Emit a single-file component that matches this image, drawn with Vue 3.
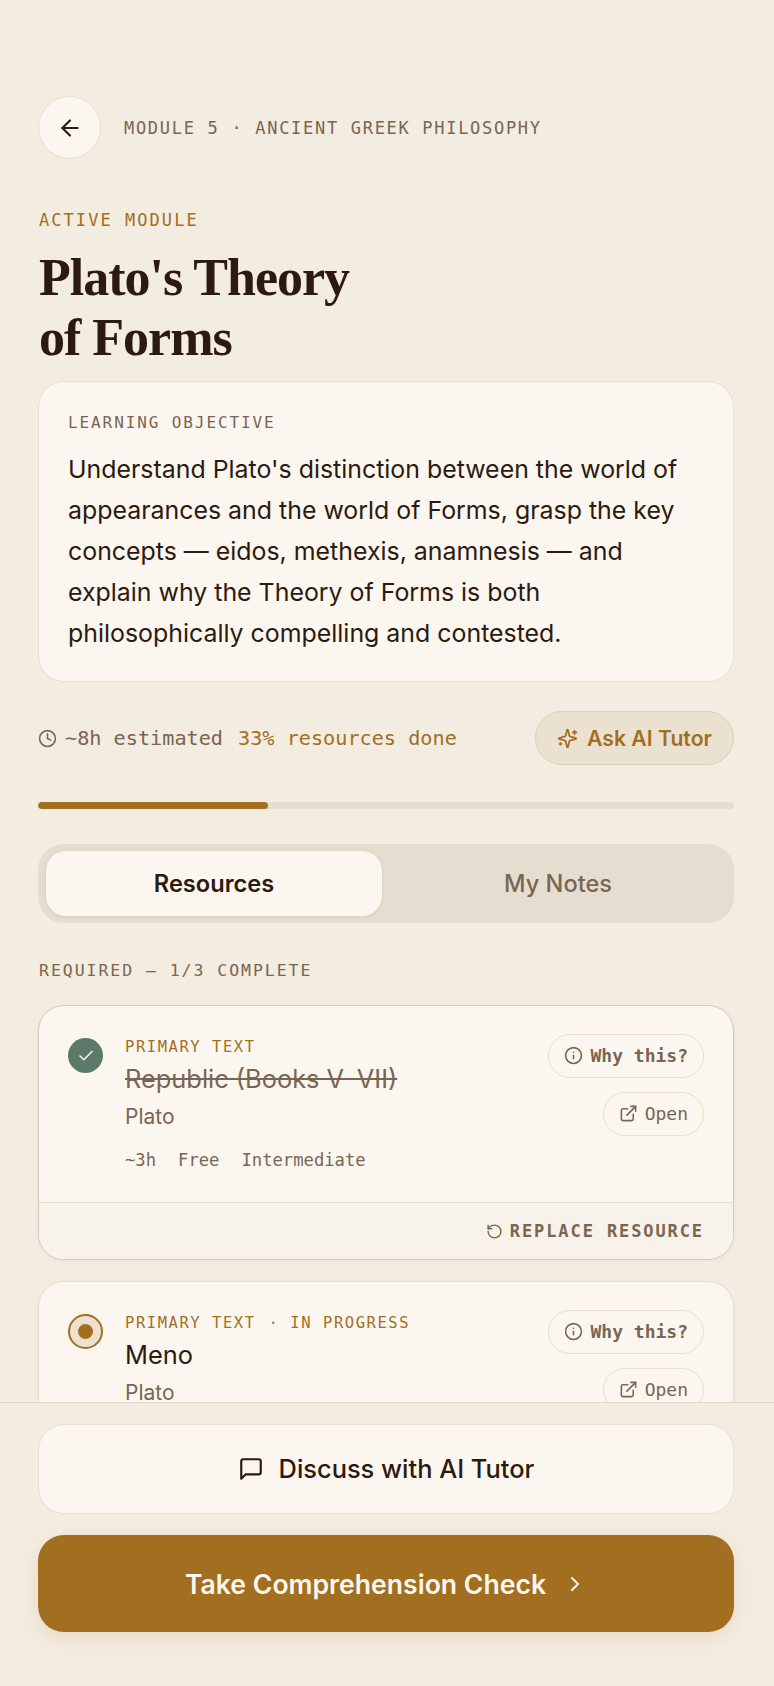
<template>
  <div class="screen">
    <div class="scroll">
      <header class="top">
        <button class="back">
          <svg class="ico" width="26" height="26" viewBox="0 0 24 24"><path d="m12 19-7-7 7-7" /><path d="M19 12H5" /></svg>
        </button>
        <span class="crumb">MODULE 5 · ANCIENT GREEK PHILOSOPHY</span>
      </header>

      <div class="eyebrow">ACTIVE MODULE</div>
      <h1 class="title">Plato's Theory<br />of Forms</h1>

      <section class="objective">
        <div class="objective-label">LEARNING OBJECTIVE</div>
        <p class="objective-text">
          Understand Plato's distinction between the world of appearances and the world of Forms, grasp the key concepts — eidos, methexis, anamnesis — and explain why the Theory of Forms is both philosophically compelling and contested.
        </p>
      </section>

      <div class="meta-row">
        <div class="meta">
          <svg class="ico" width="19" height="19" viewBox="0 0 24 24"><circle cx="12" cy="12" r="10" /><polyline points="12 6 12 12 16 14" /></svg>
          <span class="estimate">~8h estimated</span>
          <span class="done">{{ progress }}% resources done</span>
        </div>
        <button class="ask">
          <svg class="ico" width="21" height="21" viewBox="0 0 24 24"><path d="M9.937 15.5A2 2 0 0 0 8.5 14.063l-6.135-1.582a.5.5 0 0 1 0-.962L8.5 9.936A2 2 0 0 0 9.937 8.5l1.582-6.135a.5.5 0 0 1 .963 0L14.063 8.5A2 2 0 0 0 15.5 9.937l6.135 1.581a.5.5 0 0 1 0 .964L15.5 14.063a2 2 0 0 0-1.437 1.437l-1.582 6.135a.5.5 0 0 1-.963 0z" /><path d="M20 3v4" /><path d="M22 5h-4" /><path d="M4 17v2" /><path d="M5 18H3" /></svg>
          Ask AI Tutor
        </button>
      </div>

      <div class="bar"><div class="bar-fill" :style="{ width: progress + '%' }"></div></div>

      <div class="tabs">
        <div class="tab active">Resources</div>
        <div class="tab">My Notes</div>
      </div>

      <div class="section-label">REQUIRED — 1/3 COMPLETE</div>

      <article class="card done-card">
        <div class="card-body">
          <span class="status status-done">
            <svg class="ico" width="18" height="18" viewBox="0 0 24 24"><path d="M20 6 9 17l-5-5" /></svg>
          </span>
          <div class="card-main">
            <div class="kind">PRIMARY TEXT</div>
            <div class="name struck">Republic (Books V–VII)</div>
            <div class="author">Plato</div>
            <div class="facts"><span>~3h</span><span>Free</span><span>Intermediate</span></div>
          </div>
          <div class="actions">
            <button class="pill strong">
              <svg class="ico" width="19" height="19" viewBox="0 0 24 24"><circle cx="12" cy="12" r="10" /><path d="M12 16v-4" /><path d="M12 8h.01" /></svg>
              Why this?
            </button>
            <button class="pill">
              <svg class="ico" width="19" height="19" viewBox="0 0 24 24"><path d="M15 3h6v6" /><path d="M10 14 21 3" /><path d="M18 13v6a2 2 0 0 1-2 2H5a2 2 0 0 1-2-2V8a2 2 0 0 1 2-2h6" /></svg>
              Open
            </button>
          </div>
        </div>
        <div class="card-foot">
          <svg class="ico" width="17" height="17" viewBox="0 0 24 24"><path d="M3 12a9 9 0 1 0 9-9 9.75 9.75 0 0 0-6.74 2.74L3 8" /><path d="M3 3v5h5" /></svg>
          REPLACE RESOURCE
        </div>
      </article>

      <article class="card">
        <div class="card-body">
          <span class="status status-active"><i></i></span>
          <div class="card-main">
            <div class="kind">PRIMARY TEXT<span class="kind-extra">· IN PROGRESS</span></div>
            <div class="name">Meno</div>
            <div class="author">Plato</div>
          </div>
          <div class="actions">
            <button class="pill strong">
              <svg class="ico" width="19" height="19" viewBox="0 0 24 24"><circle cx="12" cy="12" r="10" /><path d="M12 16v-4" /><path d="M12 8h.01" /></svg>
              Why this?
            </button>
            <button class="pill">
              <svg class="ico" width="19" height="19" viewBox="0 0 24 24"><path d="M15 3h6v6" /><path d="M10 14 21 3" /><path d="M18 13v6a2 2 0 0 1-2 2H5a2 2 0 0 1-2-2V8a2 2 0 0 1 2-2h6" /></svg>
              Open
            </button>
          </div>
        </div>
      </article>
    </div>

    <footer class="footer">
      <button class="discuss">
        <svg class="ico" width="26" height="26" viewBox="0 0 24 24"><path d="M21 15a2 2 0 0 1-2 2H7l-4 4V5a2 2 0 0 1 2-2h14a2 2 0 0 1 2 2z" /></svg>
        Discuss with AI Tutor
      </button>
      <button class="check">
        Take Comprehension Check
        <svg class="ico" width="24" height="24" viewBox="0 0 24 24"><path d="m9 18 6-6-6-6" /></svg>
      </button>
    </footer>
  </div>
</template>

<script setup>
const progress = 33
</script>

<style>
html,
body {
  margin: 0;
  background: #f3ece0;
}
</style>

<style scoped>
.screen {
  height: 1686px;
  display: flex;
  flex-direction: column;
  background: #f3ece0;
  color: #2c1a0e;
  font-family: Inter, "Liberation Sans", sans-serif;
}

.scroll {
  flex: 1;
  min-height: 0;
  overflow: hidden;
  padding: 96px 40px 0 38px;
}

button {
  font-family: inherit;
  cursor: pointer;
}

.ico {
  flex: none;
  fill: none;
  stroke: currentColor;
  stroke-width: 2;
  stroke-linecap: round;
  stroke-linejoin: round;
}

.top {
  display: flex;
  align-items: center;
  gap: 23px;
}

.back {
  width: 63px;
  height: 63px;
  padding: 0;
  display: flex;
  align-items: center;
  justify-content: center;
  border: 1px solid #e8dfcf;
  border-radius: 50%;
  background: #fbf7f0;
  color: #2c1a0e;
}

.crumb,
.eyebrow,
.objective-label,
.section-label,
.kind,
.facts,
.meta,
.pill,
.card-foot {
  font-family: "DejaVu Sans Mono", "Liberation Mono", monospace;
}

.crumb {
  font-size: 17px;
  letter-spacing: 1.7px;
  color: #7a6552;
}

.eyebrow,
.title,
.section-label {
  margin-left: 1px;
}

.eyebrow {
  margin-top: 50px;
  font-size: 17px;
  line-height: 22px;
  letter-spacing: 2.05px;
  color: #a16f1f;
}

.title {
  margin-top: 17px;
  margin-bottom: 0;
  margin-right: 0;
  font-family: "Liberation Serif", "DejaVu Serif", serif;
  font-size: 52px;
  line-height: 60px;
  letter-spacing: -1px;
  font-weight: 700;
  color: #2c1a0e;
}

.objective {
  margin-top: 13px;
  padding: 30px 28px 27px 29px;
  border: 1px solid #e8dfcf;
  border-radius: 26px;
  background: #fbf7f0;
}

.objective-label {
  font-size: 16px;
  line-height: 22px;
  letter-spacing: 1.9px;
  color: #7a6552;
}

.objective-text {
  margin: 15px 0 0;
  font-size: 24.9px;
  line-height: 41px;
  color: #2c1a0e;
}

.meta-row {
  margin-top: 29px;
  display: flex;
  align-items: center;
  justify-content: space-between;
}

.meta {
  display: flex;
  align-items: center;
  font-size: 20.2px;
  color: #7a6552;
}

.estimate {
  margin-left: 8px;
}

.done {
  margin-left: 15px;
  color: #a16f1f;
}

.ask {
  height: 54px;
  width: 199px;
  display: flex;
  align-items: center;
  justify-content: center;
  gap: 9px;
  padding: 0;
  border: 1px solid #d9cfba;
  border-radius: 27px;
  background: #ebe1d0;
  color: #a16f1f;
  font-size: 21.2px;
  font-weight: 600;
}

.bar {
  margin-top: 37px;
  height: 7px;
  border-radius: 4px;
  background: #e5ddd0;
  overflow: hidden;
}

.bar-fill {
  height: 100%;
  border-radius: 4px;
  background: #a16f1f;
}

.tabs {
  margin-top: 35px;
  padding: 7px 8px;
  display: flex;
  gap: 8px;
  border-radius: 26px;
  background: #e5ddd0;
}

.tab {
  flex: 1;
  height: 65px;
  display: flex;
  align-items: center;
  justify-content: center;
  border-radius: 20px;
  font-size: 23.6px;
  font-weight: 500;
  color: #7a6552;
}

.tab.active {
  background: #fbf7f0;
  color: #2c1a0e;
  font-weight: 600;
  box-shadow: 0 1px 4px rgba(44, 26, 14, 0.08);
}

.section-label {
  margin-top: 37px;
  font-size: 16.5px;
  line-height: 22px;
  letter-spacing: 1.95px;
  color: #7a6552;
}

.card {
  margin-top: 23px;
  border: 1px solid #e8dfcf;
  border-radius: 26px;
  background: #fbf7f0;
  box-shadow: 0 1px 4px rgba(44, 26, 14, 0.05);
}

.done-card {
  border-color: #d2cabb;
  overflow: hidden;
}

.done-card + .card {
  margin-top: 21px;
}

.card-body {
  height: 196px;
  box-sizing: border-box;
  padding: 28px 29px 0 29px;
  display: flex;
  align-items: flex-start;
}

.status {
  flex: none;
  width: 35px;
  height: 35px;
  margin-top: 4px;
  margin-right: 22px;
  box-sizing: border-box;
  display: flex;
  align-items: center;
  justify-content: center;
  border-radius: 50%;
}

.status-done {
  background: #5b7a6a;
  color: #fbf7f0;
}

.status-active {
  border: 2px solid #a16f1f;
  background: #ebe1d0;
}

.status-active i {
  width: 15px;
  height: 15px;
  border-radius: 50%;
  background: #a16f1f;
}

.card-main {
  flex: 1;
  min-width: 0;
  padding-top: 2px;
}

.kind {
  font-size: 15.5px;
  line-height: 22px;
  letter-spacing: 1.55px;
  color: #a16f1f;
}

.kind-extra {
  margin-left: 13px;
}

.name {
  margin-top: 4px;
  font-size: 25.4px;
  line-height: 34px;
  color: #2c1a0e;
}

.name.struck {
  color: #7a6552;
  text-decoration: line-through;
}

.author {
  margin-top: 4px;
  font-size: 21px;
  line-height: 34px;
  color: #7a6552;
}

.facts {
  margin-top: 14px;
  display: flex;
  gap: 22px;
  font-size: 17.2px;
  line-height: 24px;
  color: #7a6552;
}

.actions {
  flex: none;
  display: flex;
  flex-direction: column;
  align-items: flex-end;
  gap: 14px;
}

.pill {
  height: 44px;
  display: flex;
  align-items: center;
  gap: 7px;
  padding: 0 15px 1px;
  border: 1px solid #e8dfcf;
  border-radius: 22px;
  background: transparent;
  color: #7a6552;
  font-size: 18px;
}

.pill.strong {
  font-weight: 700;
}

.card-foot {
  height: 57px;
  box-sizing: border-box;
  padding: 0 29px;
  display: flex;
  align-items: center;
  justify-content: flex-end;
  gap: 7px;
  border-top: 1px solid #e3dbc9;
  background: #f7f2ea;
  color: #7a6552;
  font-size: 17px;
  font-weight: 700;
  letter-spacing: 1.9px;
}

.footer {
  flex: none;
  padding: 21px 40px 54px 38px;
  display: flex;
  flex-direction: column;
  gap: 21px;
  border-top: 1px solid #e0d6c4;
  background: #f3ece0;
}

.discuss,
.check {
  display: flex;
  align-items: center;
  justify-content: center;
  border-radius: 26px;
}

.discuss {
  height: 90px;
  gap: 15px;
  padding-bottom: 2px;
  border: 1px solid #e8dfcf;
  background: #fbf7f0;
  color: #2c1a0e;
  font-size: 25.4px;
  font-weight: 500;
}

.check {
  height: 97px;
  gap: 17px;
  border: 0;
  background: #a16f1f;
  color: #fbf7f0;
  font-size: 26.6px;
  font-weight: 600;
  box-shadow: 0 6px 20px rgba(161, 111, 31, 0.12);
}
</style>
